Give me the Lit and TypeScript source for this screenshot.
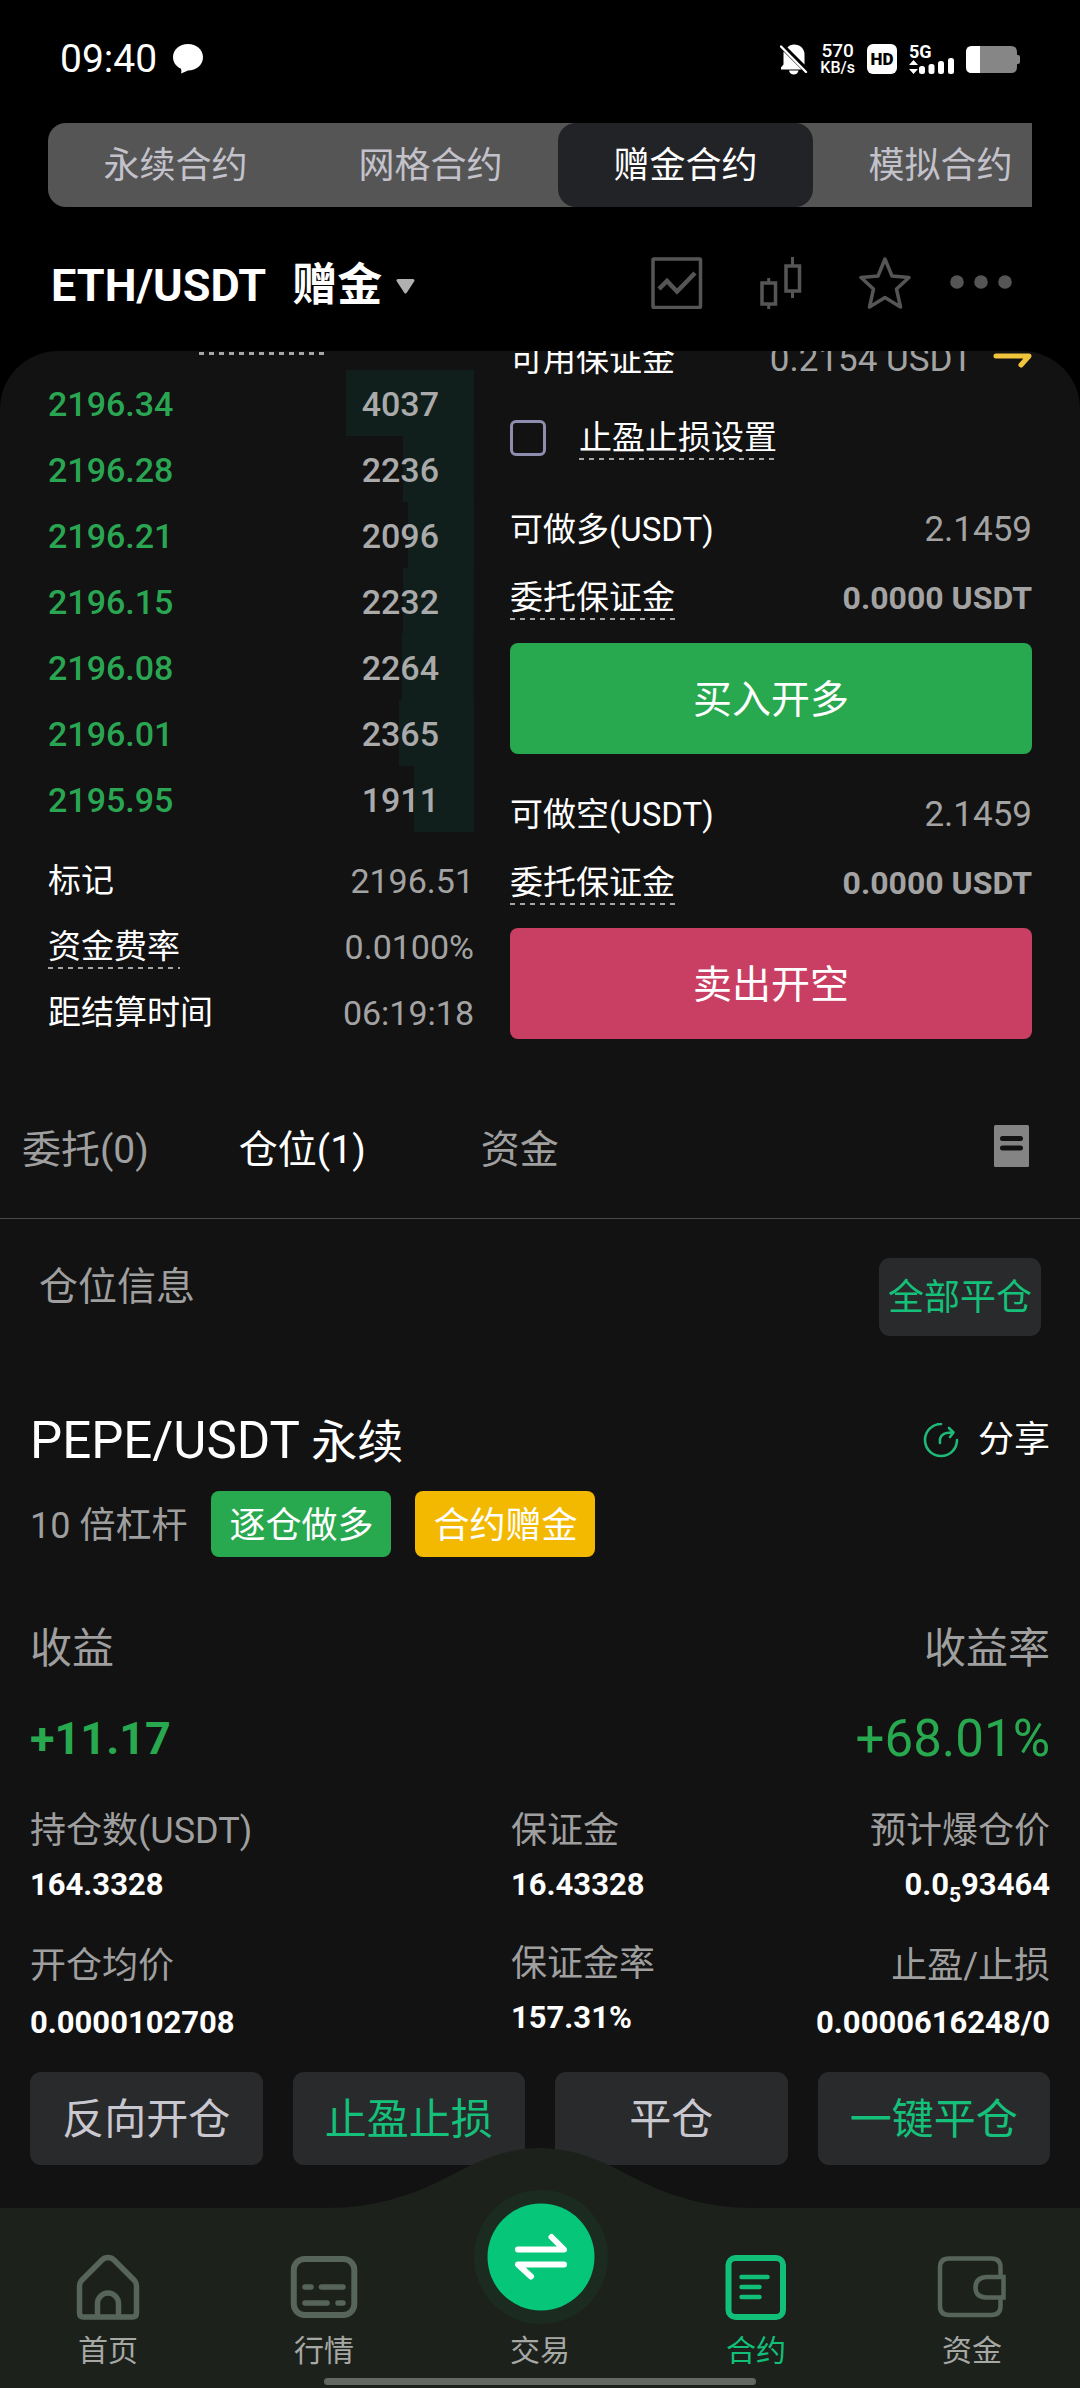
import { LitElement, html, css, svg, nothing } from "lit";
import { customElement, property, state } from "lit/decorators.js";
import { classMap } from "lit/directives/class-map.js";
import { styleMap } from "lit/directives/style-map.js";

const base = css`
  * {
    box-sizing: border-box;
  }
  button {
    margin: 0;
    padding: 0;
    border: 0;
    background: none;
    color: inherit;
    font: inherit;
    cursor: pointer;
  }
  a {
    color: inherit;
    text-decoration: none;
  }
  svg {
    display: block;
    flex: none;
  }
`;

/* ---------- status bar ---------- */

@customElement("status-bar")
class StatusBar extends LitElement {
  static styles = [
    base,
    css`
      :host {
        display: flex;
        align-items: center;
        justify-content: space-between;
        height: 60px;
        margin-top: 29px;
        padding: 0 60px;
        color: #fff;
      }
      .side {
        display: flex;
        align-items: center;
        gap: 12px;
      }
      .time {
        font-size: 39px;
        line-height: 40px;
        margin-right: 4px;
      }
      .speed {
        display: flex;
        flex-direction: column;
        align-items: center;
        font-size: 16px;
        line-height: 17px;
        font-weight: 500;
      }
      .rate {
        font-size: 19px;
      }
      .hd {
        width: 30px;
        height: 30px;
        border-radius: 6px;
        background: #fff;
        color: #000;
        font-size: 17px;
        line-height: 31px;
        font-weight: 900;
        text-align: center;
      }
      .signal {
        overflow: visible;
      }
    `,
  ];

  render() {
    return html`
      <div class="side">
        <span class="time">09:40</span>
        <svg width="30" height="30" viewBox="0 0 30 30">
          <path d="M15 0C23.500 0 30 5.700 30 13.200S23.500 26.500 15 26.500C12.700 27.300 10.600 28.600 8 29.500C8.600 27.600 8.500 26 7.700 24.600C3 22.300 0 18 0 13.200C0 5.700 6.500 0 15 0Z" fill="#fff" />
        </svg>
      </div>
      <div class="side">
        <svg width="28" height="31" viewBox="0 0 28 31" fill="#fff">
          <path d="M7.500 3.500C9 1.500 11.300 .5 14 .5C20 .5 24.500 4.500 24.500 10.500V20.500Z" />
          <path d="M3.500 7.500L21.500 25.500H1V23.500L3.500 20.500Z" />
          <path d="M9 26.500H18.500C18 29.200 16.200 30.500 13.800 30.500S9.500 29.200 9 26.500Z" />
          <path d="M1 2.500L26 28" stroke="#fff" stroke-width="2.400" stroke-linecap="round" />
        </svg>
        <div class="speed"><span class="rate">570</span><span>KB/s</span></div>
        <span class="hd">HD</span>
        <svg class="signal" width="45" height="30" viewBox="0 0 45 30" fill="#fff">
          <text x="0" y="14" font-size="18" font-weight="700">5G</text>
          <path d="M0 21L4.500 16L9 21ZM0 25H9L4.500 30Z" />
          <rect x="10" y="22" width="6" height="8" rx="2.500" />
          <rect x="19.500" y="20" width="6" height="10" rx="2.500" />
          <rect x="29" y="17" width="6" height="13" rx="2.500" />
          <rect x="39" y="14" width="6" height="16" rx="2.500" />
        </svg>
        <svg width="54" height="27" viewBox="0 0 54 27">
          <path d="M6 0H45Q51 0 51 6V9H52Q54 9 54 11V16Q54 18 52 18H51V21Q51 27 45 27H6Q0 27 0 21V6Q0 0 6 0Z" fill="#868686" />
          <path d="M6 0H14V27H6Q0 27 0 21V6Q0 0 6 0Z" fill="#fff" />
        </svg>
      </div>
    `;
  }
}

/* ---------- contract kind tabs ---------- */

@customElement("contract-tabs")
class ContractTabs extends LitElement {
  @state() private active = 2;
  private labels = ["永续合约", "网格合约", "赠金合约", "模拟合约"];

  static styles = [
    base,
    css`
      :host {
        display: block;
        margin: 34px 48px 0;
      }
      .strip {
        display: flex;
        height: 84px;
        overflow: hidden;
        border-radius: 18px 0 0 18px;
        background: #555;
      }
      .tab {
        flex: 0 0 255px;
        padding-top: 4px;
        border-radius: 18px;
        color: #c3c2cb;
        font-size: 36px;
      }
      .on {
        background: #222327;
        color: #fff;
      }
    `,
  ];

  render() {
    return html`<nav class="strip">
      ${this.labels.map(
        (label, i) => html`<button
          class=${classMap({ tab: true, on: i === this.active })}
          @click=${() => (this.active = i)}
        >${label}</button>`
      )}
    </nav>`;
  }
}

/* ---------- pair header ---------- */

@customElement("pair-header")
class PairHeader extends LitElement {
  static styles = [
    base,
    css`
      :host {
        display: flex;
        align-items: flex-start;
        justify-content: space-between;
        height: 60px;
        margin: 48px 0 36px;
        padding: 0 67px 0 51px;
      }
      .pair {
        display: flex;
        align-items: center;
        color: #fff;
        font-size: 45px;
        line-height: 62px;
        font-weight: 700;
      }
      .kind {
        margin: 0 14px 0 26px;
      }
      .tools,
      .icons {
        display: flex;
        align-items: center;
        height: 56px;
        gap: 52px;
      }
      .tools {
        gap: 38px;
      }
    `,
  ];

  render() {
    return html`
      <button class="pair">
        <span>ETH/USDT</span><span class="kind">赠金</span>
        <svg width="19" height="15" viewBox="0 0 19 15">
          <path d="M2 1.500H17L9.500 13Z" fill="#b0b0b0" stroke="#b0b0b0" stroke-width="3" stroke-linejoin="round" />
        </svg>
      </button>
      <div class="tools">
        <div class="icons">
          <button aria-label="走势">
            <svg width="52" height="52" viewBox="0 0 52 52" fill="none" stroke="#555">
              <rect x="2" y="2" width="47.500" height="48.500" rx="1" stroke-width="3.500" />
              <path d="M8 32L16 24L26 34.500L44 16" stroke-width="4.500" />
            </svg>
          </button>
          <button aria-label="K线">
            <svg width="52" height="52" viewBox="0 0 52 52" fill="none" stroke="#555" stroke-width="3.500">
              <rect x="7" y="26" width="13.500" height="21" />
              <path d="M13.700 21V26M13.700 47V52M37.500 0V8M37.500 34V41" stroke-width="3" />
              <rect x="31" y="9" width="13.500" height="25" />
            </svg>
          </button>
          <button aria-label="收藏">
            <svg width="52" height="52" viewBox="0 0 52 52" fill="none" stroke="#555" stroke-width="3.500" stroke-linejoin="round">
              <path d="M26 2L33 19L50 20.500L37.500 32L41.500 50L26 40.500L10.500 50L14.500 32L2 20.500L19 19Z" />
            </svg>
          </button>
        </div>
        <button aria-label="更多">
          <svg width="64" height="52" viewBox="0 0 64 52" fill="#555">
            <circle cx="8" cy="25" r="6.800" />
            <circle cx="32" cy="25" r="6.800" />
            <circle cx="56" cy="25" r="6.800" />
          </svg>
        </button>
      </div>
    `;
  }
}

/* ---------- order book ---------- */

const dashed = css`
  .dashed {
    display: inline-block;
    line-height: 44px;
    background: repeating-linear-gradient(90deg, #a6a6a6 0 5px, transparent 5px 10px) bottom / 100% 2px no-repeat;
  }
`;

interface Bid {
  price: string;
  amount: number;
}

@customElement("order-book")
class OrderBook extends LitElement {
  private bids: Bid[] = [
    { price: "2196.34", amount: 4037 },
    { price: "2196.28", amount: 2236 },
    { price: "2196.21", amount: 2096 },
    { price: "2196.15", amount: 2232 },
    { price: "2196.08", amount: 2264 },
    { price: "2196.01", amount: 2365 },
    { price: "2195.95", amount: 1911 },
  ];

  static styles = [
    base,
    dashed,
    css`
      :host {
        display: block;
      }
      .mark-line {
        width: 126px;
        height: 3px;
        margin: 1px 0 15px 151px;
        background: repeating-linear-gradient(90deg, #a6a6a6 0 5px, transparent 5px 10px);
      }
      .book {
        width: 100%;
        border-collapse: collapse;
        font-size: 34px;
        font-weight: 500;
      }
      .bid {
        height: 66px;
        background: linear-gradient(#111f1c, #111f1c) right / 0 100% no-repeat;
      }
      .bid td {
        padding: 3px 0 0;
      }
      .price {
        color: #2aa653;
      }
      .bid .amount {
        padding-right: 35px;
        color: #aaa;
        text-align: right;
      }
      .facts {
        margin: 15px 0 0;
        font-size: 33px;
      }
      .fact {
        display: flex;
        align-items: center;
        justify-content: space-between;
        height: 66px;
        padding-top: 2px;
        color: #fff;
      }
      dd {
        margin: 0;
        color: #a3a3a3;
        font-size: 34px;
      }
    `,
  ];

  render() {
    const max = Math.max(...this.bids.map((b) => b.amount));
    return html`
      <div class="mark-line"></div>
      <table class="book">
        <tbody>
          ${this.bids.map(
            (b) => html`<tr class="bid" style=${styleMap({ backgroundSize: `${((b.amount / max) * 30).toFixed(1)}% 100%` })}>
              <td class="price">${b.price}</td>
              <td class="amount">${b.amount}</td>
            </tr>`
          )}
        </tbody>
      </table>
      <dl class="facts">
        <div class="fact"><dt>标记</dt><dd>2196.51</dd></div>
        <div class="fact"><dt class="dashed">资金费率</dt><dd>0.0100%</dd></div>
        <div class="fact"><dt>距结算时间</dt><dd>06:19:18</dd></div>
      </dl>
    `;
  }
}

/* ---------- order form ---------- */

@customElement("order-form")
class OrderForm extends LitElement {
  static styles = [
    base,
    dashed,
    css`
      :host {
        display: block;
        margin-top: -17px;
        color: #fff;
        font-size: 33px;
      }
      .row {
        display: flex;
        align-items: center;
        justify-content: space-between;
        height: 50px;
        padding-top: 2px;
      }
      .value {
        color: #a3a3a3;
        font-size: 35px;
      }
      .strong {
        font-size: 32px;
        font-weight: 700;
      }
      .balance {
        display: flex;
        align-items: center;
        gap: 20px;
      }
      .stops {
        justify-content: flex-start;
        gap: 33px;
        margin: 28px 0 42px;
      }
      .box {
        appearance: none;
        width: 36px;
        height: 36px;
        margin: 0;
        border: 3px solid #8f8dae;
        border-radius: 6px;
      }
      .box:checked {
        background: #8f8dae;
      }
      .margin {
        margin: 18px 0 21px;
      }
      .submit {
        display: block;
        width: 100%;
        height: 111px;
        padding-top: 4px;
        border-radius: 8px;
        background: #28a84f;
        font-size: 39px;
      }
      .short {
        background: #c93f63;
      }
      .side + .side {
        margin-top: 35px;
      }
    `,
  ];

  private side(label: string, action: string, short: boolean) {
    return html`<div class="side">
      <div class="row"><span>${label}</span><span class="value">2.1459</span></div>
      <div class="row margin"><span class="dashed">委托保证金</span><span class="value strong">0.0000 USDT</span></div>
      <button class=${classMap({ submit: true, short })}>${action}</button>
    </div>`;
  }

  render() {
    return html`
      <div class="row">
        <span>可用保证金</span>
        <span class="balance value">
          0.2154 USDT
          <button aria-label="划转">
            <svg width="39" height="24" viewBox="0 0 39 24" fill="none" stroke="#f0c43b" stroke-width="5" stroke-linecap="round" stroke-linejoin="round">
              <path d="M3 8H36L28 17" />
            </svg>
          </button>
        </span>
      </div>
      <div class="row stops">
        <input class="box" type="checkbox" id="stops" />
        <label class="dashed" for="stops">止盈止损设置</label>
      </div>
      ${this.side("可做多(USDT)", "买入开多", false)}
      ${this.side("可做空(USDT)", "卖出开空", true)}
    `;
  }
}

/* ---------- position card ---------- */

@customElement("position-card")
class PositionCard extends LitElement {
  static styles = [
    base,
    css`
      :host {
        display: block;
        padding: 0 30px;
        color: #9f9f9f;
        font-size: 36px;
      }
      .row {
        display: flex;
        align-items: center;
        justify-content: space-between;
        height: 60px;
        padding-top: 2px;
      }
      .title {
        margin: 0;
        color: #fff;
        font-size: 46px;
        font-weight: 400;
      }
      .latin {
        font-size: 51px;
      }
      .share {
        display: flex;
        align-items: center;
        gap: 19px;
        color: #fff;
      }
      .tags {
        display: flex;
        align-items: center;
        gap: 24px;
        margin-top: 21px;
        line-height: 62px;
      }
      .lever {
        padding-top: 4px;
      }
      .tag {
        padding: 4px 18px 0;
        border-radius: 8px;
        background: #28a84f;
        color: #fff;
      }
      .gift {
        background: #f3b900;
      }
      .heads {
        margin-top: 61px;
        font-size: 42px;
      }
      .gains {
        margin-top: 30px;
        color: #28a84f;
      }
      .pnl {
        font-size: 45px;
        font-weight: 700;
      }
      .rate {
        font-size: 51px;
      }
      .stats {
        display: grid;
        grid-template-columns: 481fr 270fr 269fr;
        margin-top: 43px;
      }
      .column {
        display: flex;
        flex-direction: column;
        gap: 41px;
        margin: 0;
        line-height: 40px;
        white-space: nowrap;
      }
      .compact {
        gap: 39px;
      }
      .end {
        text-align: right;
        align-items: flex-end;
      }
      .column dd {
        margin: 14px 0 0;
        color: #fff;
        font-size: 31px;
        font-weight: 700;
      }
      .loose + .loose dd {
        margin-top: 17px;
      }
      sub {
        font-size: 21px;
        line-height: 0;
      }
      .actions {
        display: grid;
        grid-template-columns: repeat(4, 1fr);
        gap: 30px;
        margin-top: 29px;
      }
      .action {
        height: 93px;
        padding-top: 4px;
        border-radius: 11px;
        background: #292a2b;
        color: #c9c7d0;
        font-size: 42px;
      }
      .green {
        color: #14c07a;
      }
    `,
  ];

  private stat(label: string, value: unknown, loose = true) {
    return html`<div class=${classMap({ loose })}><dt>${label}</dt><dd>${value}</dd></div>`;
  }

  render() {
    return html`
      <div class="row">
        <h2 class="title"><span class="latin">PEPE/USDT</span> 永续</h2>
        <button class="share">
          <svg width="36" height="36" viewBox="0 0 36 36" fill="none" stroke="#1fb978" stroke-width="2.600" stroke-linecap="round" stroke-linejoin="round">
            <path d="M18 1A16 16 0 1 0 34 17" />
            <path d="M17 20C16 13 20 9 30 9.500M26 5L30.500 9.500L27 14" />
          </svg>
          分享
        </button>
      </div>
      <div class="tags">
        <span class="lever">10 倍杠杆</span>
        <span class="tag">逐仓做多</span>
        <span class="tag gift">合约赠金</span>
      </div>
      <div class="row heads"><span>收益</span><span>收益率</span></div>
      <div class="row gains"><span class="pnl">+11.17</span><span class="rate">+68.01%</span></div>
      <div class="stats">
        <dl class="column">
          ${this.stat("持仓数(USDT)", "164.3328")}
          ${this.stat("开仓均价", "0.0000102708")}
        </dl>
        <dl class="column compact">
          ${this.stat("保证金", "16.43328", false)}
          ${this.stat("保证金率", "157.31%", false)}
        </dl>
        <dl class="column end">
          ${this.stat("预计爆仓价", html`0.0<sub>5</sub>93464`)}
          ${this.stat("止盈/止损", "0.0000616248/0")}
        </dl>
      </div>
      <div class="actions">
        <button class="action">反向开仓</button>
        <button class="action green">止盈止损</button>
        <button class="action">平仓</button>
        <button class="action green">一键平仓</button>
      </div>
    `;
  }
}

/* ---------- bottom navigation ---------- */

const navIcons = {
  home: svg`<path d="M33 4.500Q29.500 4.500 27 7L6.500 27.500Q4.500 30 4.500 33V60Q4.500 64 8.500 64H57.500Q61.500 64 61.500 60V33Q61.500 30 59.500 27.500L39 7Q36.500 4.500 33 4.500Z"/><path d="M22.500 63V50.500A10.500 10.500 0 0 1 43.500 50.500V63"/>`,
  market: svg`<rect x="2.800" y="6" width="60.500" height="56" rx="11" stroke-width="6"/><path d="M14 34H20M30.500 34H52M14 50H36M47 50H52" stroke-width="5.500"/>`,
  contract: svg`<rect x="5.500" y="5" width="54.500" height="59" rx="7" stroke-width="6"/><path d="M18.500 24H44.500M18.500 34H36.500M18.500 44H36.500" stroke-width="4.500"/>`,
  wallet: svg`<path d="M61.500 23V14.500Q61.500 5.500 52.500 5.500H10Q1 5.500 1 14.500V53Q1 62 10 62H52.500Q61.500 62 61.500 53V45" stroke-width="4.500"/><path d="M64.500 24H47Q36.500 25 36.500 34.500T47 44.500H64.500Z" stroke-width="4.500" stroke-linejoin="miter"/>`,
};

@customElement("nav-item")
class NavItem extends LitElement {
  @property() label = "";
  @property() icon = "";
  @property({ type: Boolean }) active = false;

  static styles = [
    base,
    css`
      :host {
        display: block;
      }
      .link {
        position: relative;
        display: flex;
        flex-direction: column;
        align-items: center;
        height: 163px;
        padding-top: 45px;
        color: #a6a8a5;
        font-size: 30px;
        line-height: 40px;
      }
      .icon {
        overflow: visible;
        fill: none;
        stroke: #57645a;
        stroke-width: 5.5px;
        stroke-linecap: round;
        stroke-linejoin: round;
      }
      .on {
        color: #12bf78;
      }
      .on .icon {
        stroke: #12bf78;
      }
      .label {
        margin-top: auto;
      }
      .fab {
        position: absolute;
        top: -18px;
        left: calc(50% - 66px);
      }
    `,
  ];

  render() {
    const shape = navIcons[this.icon as keyof typeof navIcons];
    return html`<a class=${classMap({ link: true, on: this.active })} href="#${this.icon}">
      ${shape
        ? html`<svg class="icon" width="66" height="66" viewBox="0 0 66 66">${shape}</svg>`
        : html`<svg class="fab" width="134" height="134" viewBox="0 0 134 134">
            <circle cx="67" cy="67" r="67" fill="#1b2b20" />
            <circle cx="67" cy="67" r="53.500" fill="#05c679" />
            <path d="M44 59.500H90L77.500 47M90 74.500H44L57 86.500" fill="none" stroke="#fff" stroke-width="6" stroke-linecap="round" stroke-linejoin="round" />
          </svg>`}
      <span class="label">${this.label}</span>
    </a>`;
  }
}

@customElement("bottom-nav")
class BottomNav extends LitElement {
  static styles = [
    base,
    css`
      :host {
        position: relative;
        display: block;
        padding-bottom: 3px;
        background: #1d211c;
      }
      .hump {
        position: absolute;
        top: -60px;
        left: calc(50% - 215px);
      }
      .items {
        position: relative;
        display: grid;
        grid-template-columns: repeat(5, 1fr);
      }
      .handle {
        width: 40%;
        height: 7px;
        margin: 7px auto 0;
        border-radius: 4px;
        background: #636863;
      }
    `,
  ];

  render() {
    return html`
      <svg class="hump" width="430" height="61" viewBox="0 0 430 61">
        <path d="M0 60C50 60 88 47 123 29C150 14 180 0 215 0C250 0 280 14 307 29C342 47 380 60 430 60V61H0Z" fill="#1d211c" />
      </svg>
      <nav class="items">
        <nav-item icon="home" label="首页"></nav-item>
        <nav-item icon="market" label="行情"></nav-item>
        <nav-item icon="trade" label="交易"></nav-item>
        <nav-item icon="contract" label="合约" active></nav-item>
        <nav-item icon="wallet" label="资金"></nav-item>
      </nav>
      <div class="handle"></div>
    `;
  }
}

/* ---------- page ---------- */

@customElement("app-root")
class AppRoot extends LitElement {
  @state() private tab = 1;
  private tabs = ["委托(0)", "仓位(1)", "资金"];

  static styles = [
    base,
    css`
      :host {
        display: flex;
        flex-direction: column;
        min-height: 100vh;
        overflow: hidden;
        background: #000;
        font-family: Roboto, "Noto Sans CJK SC", sans-serif;
        line-height: 1.2;
      }
      .panel {
        flex: 1;
        overflow: hidden;
        border-radius: 58px 58px 0 0;
        background: #121212;
      }
      .trade {
        display: grid;
        grid-template-columns: 426fr 522fr;
        gap: 36px;
        padding: 0 48px;
      }
      .tabs {
        display: flex;
        align-items: flex-start;
        height: 174px;
        padding: 80px 51px 0 22px;
        border-bottom: 1px solid #4a4a4a;
        color: #9f9f9f;
        font-size: 39px;
        line-height: 50px;
      }
      .tab {
        margin-right: 90px;
      }
      .tab + .tab {
        margin-right: 115px;
      }
      .on {
        color: #fff;
      }
      .history {
        margin-left: auto;
      }
      .section {
        display: flex;
        align-items: flex-start;
        justify-content: space-between;
        margin-bottom: 74px;
        padding: 39px 39px 0;
      }
      .heading {
        margin: 0;
        color: #9f9f9f;
        font-size: 39px;
        line-height: 58px;
        font-weight: 400;
      }
      .close-all {
        height: 78px;
        padding: 4px 9px 0;
        border-radius: 11px;
        background: #292a2b;
        color: #14c07a;
        font-size: 36px;
      }
    `,
  ];

  render() {
    return html`
      <status-bar></status-bar>
      <contract-tabs></contract-tabs>
      <pair-header></pair-header>
      <main class="panel">
        <div class="trade">
          <order-book></order-book>
          <order-form></order-form>
        </div>
        <div class="tabs">
          ${this.tabs.map(
            (label, i) => html`<button
              class=${classMap({ tab: true, on: i === this.tab })}
              aria-current=${i === this.tab ? "page" : nothing}
              @click=${() => (this.tab = i)}
            >${label}</button>`
          )}
          <button class="history" aria-label="历史">
            <svg width="35" height="42" viewBox="0 0 35 42">
              <rect width="35" height="42" rx="1.500" fill="#848484" />
              <path d="M8.500 13.500H26.500M8.500 23H26.500" stroke="#121212" stroke-width="5" stroke-linecap="round" />
            </svg>
          </button>
        </div>
        <div class="section">
          <h2 class="heading">仓位信息</h2>
          <button class="close-all">全部平仓</button>
        </div>
        <position-card></position-card>
      </main>
      <bottom-nav></bottom-nav>
    `;
  }
}
